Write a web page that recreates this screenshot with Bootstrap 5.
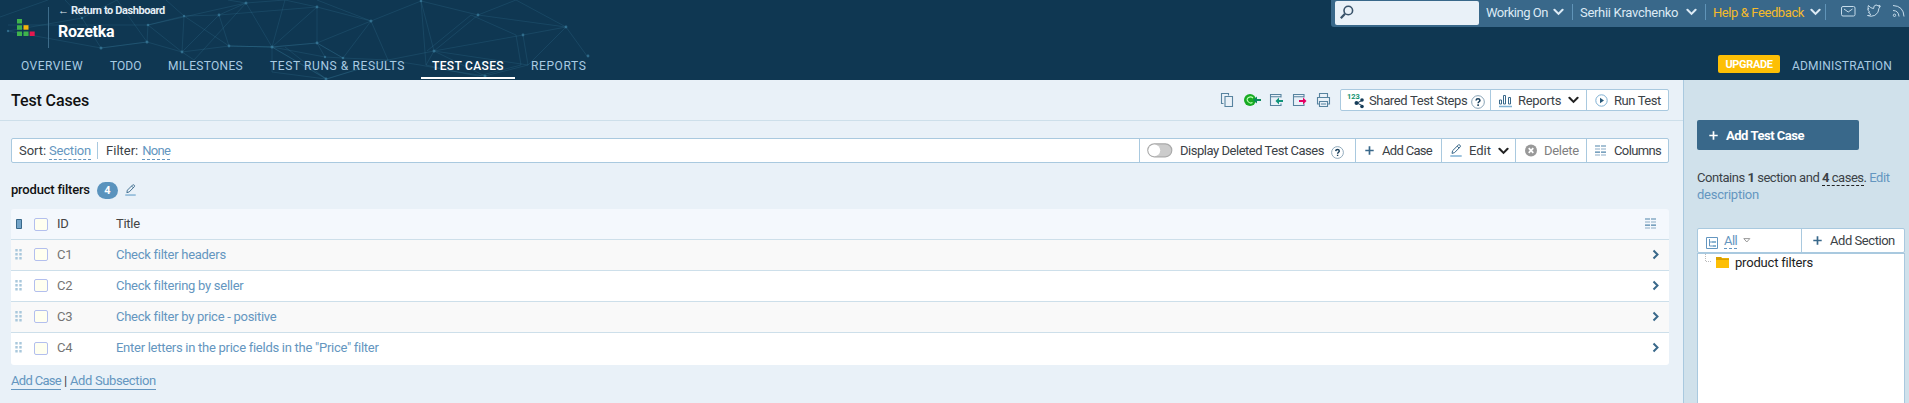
<!DOCTYPE html>
<html lang="en">
<head>
<meta charset="utf-8">
<title>Test Cases - Rozetka</title>
<link href="https://cdn.jsdelivr.net/npm/bootstrap@5.3.0/dist/css/bootstrap.min.css" rel="stylesheet">
<style>
body{font:13px/17px Roboto,"Liberation Sans",sans-serif;letter-spacing:-.3px;color:#3b4247;background:#e9f1f8;height:403px;overflow:hidden;white-space:nowrap}
svg{display:block;flex:none}
a{text-decoration:none;color:#6496c0}
.topbar{height:80px;background:#0f3752;position:relative}
.mesh{position:absolute;left:0;top:0}
.brand{height:54px;position:relative}
.logo{margin:19px 0 0 17px}
.sep{width:1px;height:41px;margin:7px 0 0 13px;background:#3d6c8a}
.project{margin:3px 0 0 9px;color:#fff}
.back{font-size:11px;font-weight:700;line-height:16px;color:#e3edf5;letter-spacing:-.4px}
.pname{font-size:16px;font-weight:700;line-height:20px;margin-top:3px;letter-spacing:-.3px}
.util{width:578px;height:27px;background:#39688a;border-bottom-left-radius:3px;color:#dceaf5;padding:1px 0 2px 4px}
.search{width:144px;height:24px;background:#e9f1f8;border-radius:2px;padding:4px 0 0 5px}
.util .item{height:16px;border-right:1px solid #6094b8;margin-top:3px;padding-left:7px}
.u-work{width:94px;letter-spacing:-.47px}
.u-user{width:133px}
.u-help{width:120px;color:#f5bb2b;letter-spacing:-.41px}
.u-help svg{color:#dceaf5}
.tabs{height:26px;font-size:12px;line-height:14px;letter-spacing:.6px;color:#a9cbe3;position:relative}
.tabs .tab{padding:5px 0 0 11px;height:25px}
.tabs .active{color:#fff;border-bottom:2px solid #fff;font-weight:500;letter-spacing:.35px;width:94px;margin-right:5px}
.t-overview{width:89px;margin-left:10px;letter-spacing:.47px}
.t-todo{width:58px;letter-spacing:0}
.t-miles{width:102px;letter-spacing:.31px}
.t-runs{width:162px}
.tabs .t-admin{width:117px;padding-left:0;letter-spacing:.2px}
.upgrade{width:62px;height:18px;margin:1px 12px 0 0;background:#fdbf05;color:#fff;border-radius:2px;font-weight:700;font-size:11px;line-height:19px;text-align:center;letter-spacing:-.35px}
.main-col{width:1683px;height:323px}
.side{width:226px;height:323px;background:#d0e1eb;border-left:1px solid #a9c9df;padding:40px 0 0 13px}
.titlebar{height:41px;border-bottom:1px solid #cddfea;padding-left:11px}
.titlebar h1{font-size:16px;font-weight:500;line-height:20px;margin:11px 0 0;color:#111;letter-spacing:-.1px}
.quick{margin:12px 1px 0 auto}
.group{background:#fff;border:1px solid #a9c9df;border-radius:2px}
.group .cell{height:100%;border-right:1px solid #a9c9df;display:flex;align-items:center;padding-left:8px;gap:7px}
.group .cell:last-child{border-right:0}
.group .caret{margin:0 7px 0 auto;color:#222}
.tools{width:329px;height:22px;margin:9px 14px 0 0}
.group .c-steps{width:150px;padding-left:6px;gap:4px;letter-spacing:-.36px}
.group .c-rep{width:96px;gap:6px}
.group .c-run{gap:6px;letter-spacing:-.42px}
.group .c-sort{width:1128px;padding-left:7px;gap:0}
.group .c-del{width:216px;padding-left:7px;letter-spacing:-.47px}
.group .c-add{width:86px;padding-left:9px;gap:8px;letter-spacing:-.68px}
.group .c-edit{width:74px;letter-spacing:0}
.group .c-x{width:71px;padding-left:9px;color:#808080}
.group .c-cols{gap:8px;letter-spacing:-.62px}
.dash{border-bottom:1px dashed #6496c0;color:#6496c0}
.vr-thin{width:1px;height:17px;background:#a9c9df;margin:0 8px 0 6px}
.v-sort{letter-spacing:-.05px}.v-sect{letter-spacing:-.2px;margin-left:3px}
.v-filt{letter-spacing:0}.v-none{letter-spacing:-.68px;margin-left:4px}
.filterbar{width:1658px;height:25px;margin:17px 0 0 11px}
.sect{height:18px;margin:18px 0 0 11px;gap:7px}
.sect-name{color:#111;font-weight:500;letter-spacing:-.2px;margin-top:-2px}
.count{width:21px;height:17px;border-radius:9px;background:#5a93bd;color:#fff;font-weight:700;font-size:11px;line-height:17px;text-align:center}
.grid-table{width:1658px;margin:10px 0 0 11px;border-radius:3px;overflow:hidden}
.rowline{height:31px;border-bottom:1px solid #cddfea;background:#fff;color:#747474;padding:0 10px 2px 4px;display:flex;align-items:center}
.rowline:nth-child(even){background:#f9f9f9}
.rowline.hd{background:#f4f8fd;color:#444;padding-right:13px;padding-bottom:1px}
.rowline:last-child{height:32px;border:0;padding-bottom:3px}
.rowline a{letter-spacing:-.27px}
.tick{width:14px;height:13px;border:1px solid #b3bfee;border-radius:2px;background:#fffff0;margin:1px 0 0 12px;flex:none}
.idc{width:59px;margin-left:9px}
.foot{margin:7px 0 0 11px;gap:3px}
.foot a{border-bottom:1px solid #6496c0}
.foot .f1{letter-spacing:-.68px}
.foot .f2{letter-spacing:-.36px}
.add{width:162px;height:30px;background:#39688a;border-radius:2px;color:#fff;font-weight:700;padding-left:12px;gap:8px;letter-spacing:-.47px}
.desc{margin:19px 0 0;line-height:17px;letter-spacing:-.47px}
.desc .cases{border-bottom:1px dashed #222}
.desc .l2{letter-spacing:-.24px}
.tree{width:208px;height:25px;margin-top:25px}
.tree .c-all{width:104px;gap:6px;letter-spacing:-.6px}
.tree .c-all .dash{line-height:15px}
.tree .c-sec{padding-left:11px;gap:8px;letter-spacing:-.45px}
.treebody{width:208px;height:160px;background:#fff;border:1px solid #a9c9df;color:#222;padding:0 0 0 7px;gap:5px;letter-spacing:-.19px}
</style>
</head>
<body>
<svg width="0" height="0" class="position-absolute">
<symbol id="chev" viewBox="0 0 10 7"><path d="M1.300 1.500 5 5.200 8.700 1.500" fill="none" stroke="currentColor" stroke-width="1.900" stroke-linecap="round"/></symbol>
<symbol id="plus" viewBox="0 0 9 9"><path d="M4.500 .3v8.400M.3 4.500h8.400" stroke="currentColor" stroke-width="1.700"/></symbol>
<symbol id="pen" viewBox="0 0 12 13"><path d="M.3 12h11.400" stroke="#7fb0d3" stroke-width="1.500"/><path d="m2 9.400.6-2.700L8.300 1q.8-.6 1.700.2t.2 1.700L4.600 8.600zM7.200 2.200l1.900 1.900" fill="none" stroke="#39688a" stroke-width="1"/></symbol>
<symbol id="cols" viewBox="0 0 11 11"><path d="M0 1h5M6 1h5M0 7.200h5M6 7.200h5" stroke="#4f83a9" stroke-width="1.200"/><path d="M0 4h5M6 4h5M0 10h5M6 10h5" stroke="#8bacc6" stroke-width="1.200"/></symbol>
<symbol id="help" viewBox="0 0 13 13"><circle cx="6.500" cy="6.500" r="5.900" fill="#fff" stroke="#7594aa" stroke-width=".8"/><path d="M4.700 5.100Q4.800 3.500 6.500 3.500t1.800 1.500c0 1.200-1.700 1.300-1.700 2.700M6.600 8.700v1.400" fill="none" stroke="#163c58" stroke-width="1.400"/></symbol>
<symbol id="grip" viewBox="0 0 7 11"><path d="M1.500 0v11M5.500 0v11" stroke="#a9c8dc" stroke-width="2.400" stroke-dasharray="2.500 1.500"/></symbol>
<symbol id="go" viewBox="0 0 7 11"><path d="m1.500 1.500 4 4-4 4" fill="none" stroke="#39688a" stroke-width="2"/></symbol>
</svg>

<header class="topbar">
<svg class="mesh" width="600" height="80" fill="none" stroke="#3c7fa0" stroke-opacity=".28" stroke-width=".8"><path d="M0 17 48 0M8 31l74-13L101 48l46-6 1-17 36-9 35-1 27-12 26 44-43-1-10-31-37 37-35-10-46 6M8 31l93 17M8 25l140 0M82 18 65 0M82 18l35-18M148 25l34 27 47-6 43 1 45-4 54-22 17 39-45-2-26-15-45 4M148 25l98-22 39-3 32 7v36l8 14 18 1 28-37 50-20 13 50-8 14 26 6 26 5 43-11-5-30-45-20-44 36M184 16l-2 36 12 8 52-57M184 16l45 30 43 1 0 25 54 7-54-32 53 10M317 7l54 14M317 7l-45 40 13-47M219 15l98-8M371 21l-54-21M421 1l57 14 38-15 50 27 21 29M478 15l88 12-43 8 5 30 38-38M478 15l-44 36 89-16M388 60l46-9 51 25-33-5-32-6-32-5-62 19-41-32M317 43l26 15M147 42l-30-42M184 16l-18-16M246 3l-18-3M434 51l94 14-43 11M421 1l5 64M272 47l55 32 61-19"/><g fill="#3c7fa0" fill-opacity=".7" stroke="none"><circle cx="8" cy="31" r="1.200"/><circle cx="82" cy="18" r="1.200"/><circle cx="101" cy="48" r="1.500"/><circle cx="147" cy="42" r="1.500"/><circle cx="148" cy="25" r="1.300"/><circle cx="184" cy="16" r="1.200"/><circle cx="219" cy="15" r="1.400"/><circle cx="182" cy="52" r="1.400"/><circle cx="229" cy="46" r="1.400"/><circle cx="246" cy="3" r="1.500"/><circle cx="272" cy="47" r="1.500"/><circle cx="317" cy="7" r="1.400"/><circle cx="317" cy="43" r="1.400"/><circle cx="325" cy="57" r="1.200"/><circle cx="343" cy="58" r="1.300"/><circle cx="371" cy="21" r="1.500"/><circle cx="421" cy="1" r="1.300"/><circle cx="434" cy="51" r="1.500"/><circle cx="478" cy="15" r="1.400"/><circle cx="523" cy="35" r="1.400"/><circle cx="566" cy="27" r="1.400"/><circle cx="588" cy="56" r="1.400"/><circle cx="485" cy="76" r="1.500"/><circle cx="326" cy="79" r="1.400"/></g></svg>
<div class="brand d-flex">
<svg class="logo" width="18" height="17"><path fill="#3fb34c" d="M0 0h5v4.500H0zM0 6.200h5v4.500H0zM0 12.500h5V17H0zM6.500 12.500h5V17h-5z"/><path fill="#f5b50b" d="M6.500 6.200h5v4.500h-5z"/><path fill="#e5184f" d="M12.700 12.500h5V17h-5z"/></svg>
<div class="sep"></div>
<div class="project"><div class="back">← Return to Dashboard</div><div class="pname">Rozetka</div></div>
<div class="util ms-auto d-flex">
<div class="search"><svg width="14" height="15" fill="none" stroke="#39536a"><circle cx="8.300" cy="5.500" r="4.300" stroke-width="1.600"/><path d="m5 8.700-4.200 4.600" stroke-width="2.200"/></svg></div>
<div class="item u-work d-flex align-items-center">Working On<svg class="ms-auto me-2" width="11" height="8"><use href="#chev"/></svg></div>
<div class="item u-user d-flex align-items-center">Serhii Kravchenko<svg class="ms-auto me-2" width="11" height="8"><use href="#chev"/></svg></div>
<div class="item u-help d-flex align-items-center">Help &amp; Feedback<svg class="ms-auto me-1" width="11" height="8"><use href="#chev"/></svg></div>
<svg width="83" height="24" viewBox="0 0 83 24" fill="none" stroke="#c5dbea" stroke-width="1"><rect x="15.500" y="5.500" width="13.500" height="9.500" rx="1.500"/><path d="m18 8 4.200 3L26.500 8M41.500 14.500q2.200.2 3.500-1-2-.8-2.500-2.300l1.200-.2q-2-1.200-2-3.300l1.200.4q-1.500-1.800-.5-3.600 2.300 2.800 5.200 3.100Q47.500 4.300 50 4q1.200 0 2 .9l1.900-.6-1 1.600 1.500-.4-1.400 1.700q-.2 5-4.200 7.200-3.800 1.700-7.300.1M67 9.500q5.500 0 6 6M67 4.500q10.500.5 11 11"/><circle cx="68.500" cy="14.300" r="1.200"/></svg>
</div>
</div>
<nav class="tabs d-flex">
<div class="tab t-overview">OVERVIEW</div><div class="tab t-todo">TODO</div><div class="tab t-miles">MILESTONES</div><div class="tab t-runs">TEST RUNS &amp; RESULTS</div><div class="tab active">TEST CASES</div><div class="tab">REPORTS</div>
<div class="upgrade ms-auto">UPGRADE</div><div class="tab t-admin">ADMINISTRATION</div>
</nav>
</header>

<div class="d-flex">
<main class="main-col">
<div class="titlebar d-flex"><h1>Test Cases</h1>
<svg class="quick" width="119" height="17" viewBox="0 0 119 17" fill="none" stroke="#57839f" stroke-width="1.100"><path d="M3.500 11.500h-2v-10h7v2"/><path d="M5 4.500h7.500v10H5z"/><circle cx="30" cy="8" r="6" fill="#17ab22" stroke="none"/><path d="M33 6Q31 4 28.500 5.500t-.5 4 4.500 1" stroke="#bfffb5"/><path d="M41 8h-7" stroke="#0c8a5a" stroke-width="2"/><path d="m37 4.500-4 3.500 4 3.500z" fill="#0c8a5a" stroke="none"/><path d="M61 5.500v-3H50.500v11H61v-2M50.500 4.800H61"/><path d="M63 9h-5" stroke="#11957a" stroke-width="2"/><path d="m59 5.500-3.500 3.500 3.500 3.500z" fill="#11957a" stroke="none"/><path d="M84 5.500v-3H73.500v11H84v-2M73.500 4.800H84"/><path d="M79 9h5" stroke="#e40063" stroke-width="2"/><path d="m83 5.500 3.500 3.500-3.500 3.500z" fill="#e40063" stroke="none"/><path d="M99.500 5V1.500h8V5M99 12h-1.500V5.500h12V12H108M99.500 9.500h8v5h-8zM101 12h5"/></svg>
<div class="tools group d-flex">
<div class="cell c-steps"><svg width="18" height="18"><text x="0" y="8" font-size="7.500" font-weight="700" fill="#12936f" letter-spacing="0">123</text><path d="m16 9-6 3 6 3" fill="none" stroke="#163c58"/><g fill="#163c58"><circle cx="15" cy="9" r="1.800"/><circle cx="9.500" cy="12" r="2"/><circle cx="15" cy="15.500" r="1.800"/></g></svg>Shared Test Steps<svg class="mt-1" width="14" height="14"><use href="#help"/></svg></div>
<div class="cell c-rep"><svg width="13" height="15" fill="none" stroke="#39688a"><path d="M.5 7h2v4h-2zM4.500 2.500h2V11h-2zM9.500 4.500h2V11h-2z"/><path d="M0 13.500h13" stroke="#7fb0d3" stroke-width="1.500"/></svg>Reports<svg class="caret" width="11" height="8"><use href="#chev"/></svg></div>
<div class="cell c-run"><svg width="13" height="13"><circle cx="6.500" cy="6.500" r="5.700" fill="none" stroke="#7fb0d3"/><path d="m5 3.800 4 2.700-4 2.700z" fill="#285878"/></svg>Run Test</div>
</div></div>

<div class="filterbar group d-flex">
<div class="cell c-sort"><span class="v-sort">Sort:</span><span class="dash v-sect">Section</span><span class="vr-thin"></span><span class="v-filt">Filter:</span><span class="dash v-none">None</span></div>
<div class="cell c-del"><svg width="26" height="15"><rect x=".8" y=".8" width="24" height="13" rx="6.500" fill="#ccc" stroke="#aaa" stroke-width="1.200"/><circle cx="7.300" cy="7.300" r="5.900" fill="#fff"/></svg>Display Deleted Test Cases<svg class="mt-1" width="13" height="13"><use href="#help"/></svg></div>
<div class="cell c-add"><svg width="9" height="9" color="#39688a"><use href="#plus"/></svg>Add Case</div>
<div class="cell c-edit"><svg width="12" height="13"><use href="#pen"/></svg>Edit<svg class="caret" width="11" height="8"><use href="#chev"/></svg></div>
<div class="cell c-x"><svg width="12" height="13"><circle cx="6" cy="6.500" r="6" fill="#999"/><path d="m3.700 4.200 4.600 4.600m0-4.600L3.700 8.800" stroke="#fff" stroke-width="1.700"/></svg>Delete</div>
<div class="cell c-cols"><svg width="11" height="11"><use href="#cols"/></svg>Columns</div>
</div>

<div class="sect d-flex align-items-center"><span class="sect-name">product filters</span><span class="count">4</span><svg width="11" height="12"><use href="#pen"/></svg></div>

<div class="grid-table">
<div class="rowline hd"><svg width="7" height="10"><path d="M1.500.5h5v9h-5z" fill="#73a4c8" stroke="#39688a"/></svg><span class="tick"></span><span class="idc">ID</span><span>Title</span><svg class="ms-auto" width="11" height="11"><use href="#cols"/></svg></div>
<div class="rowline"><svg width="7" height="11"><use href="#grip"/></svg><span class="tick"></span><span class="idc">C1</span><a href="#">Check filter headers</a><svg class="ms-auto" width="7" height="11"><use href="#go"/></svg></div>
<div class="rowline"><svg width="7" height="11"><use href="#grip"/></svg><span class="tick"></span><span class="idc">C2</span><a href="#">Check filtering by seller</a><svg class="ms-auto" width="7" height="11"><use href="#go"/></svg></div>
<div class="rowline"><svg width="7" height="11"><use href="#grip"/></svg><span class="tick"></span><span class="idc">C3</span><a href="#">Check filter by price - positive</a><svg class="ms-auto" width="7" height="11"><use href="#go"/></svg></div>
<div class="rowline"><svg width="7" height="11"><use href="#grip"/></svg><span class="tick"></span><span class="idc">C4</span><a href="#">Enter letters in the price fields in the "Price" filter</a><svg class="ms-auto" width="7" height="11"><use href="#go"/></svg></div>
</div>
<div class="foot d-flex"><a href="#" class="f1">Add Case</a><span>|</span><a href="#" class="f2">Add Subsection</a></div>
</main>

<aside class="side">
<div class="add d-flex align-items-center"><svg width="9" height="9"><use href="#plus"/></svg>Add Test Case</div>
<p class="desc">Contains <b>1</b> section and <span class="cases"><b>4</b> cases</span>. <a href="#">Edit</a><br><a href="#" class="l2">description</a></p>
<div class="tree group d-flex">
<div class="cell c-all"><svg class="mt-1" width="12" height="12" fill="none" stroke="#6496c0"><path d="M.5.5h11v11H.5zM3.500 2v7H8M3.500 5H6"/><path d="M6 4h4v2H6zM7 8h3v2H7z" fill="#8bb4d1" stroke="none"/></svg><span class="dash">All</span><svg width="8" height="5"><path d="M.8.6h6L3.800 4z" fill="none" stroke="#999"/></svg></div>
<div class="cell c-sec"><svg width="9" height="9" color="#39688a"><use href="#plus"/></svg>Add Section</div>
</div>
<div class="treebody d-flex"><svg width="25" height="17"><path d="M.5 0v7.500H6" fill="none" stroke="#bbb" stroke-dasharray="1 1"/><path d="M11 3h5l1 1h7v10H11z" fill="#fdbf05"/><path d="M11 3h5l1 1.500h7V6H11z" fill="#d9a000"/></svg>product filters</div>
</aside>
</div>
<script src="https://cdn.jsdelivr.net/npm/bootstrap@5.3.0/dist/js/bootstrap.bundle.min.js"></script>
</body>
</html>
